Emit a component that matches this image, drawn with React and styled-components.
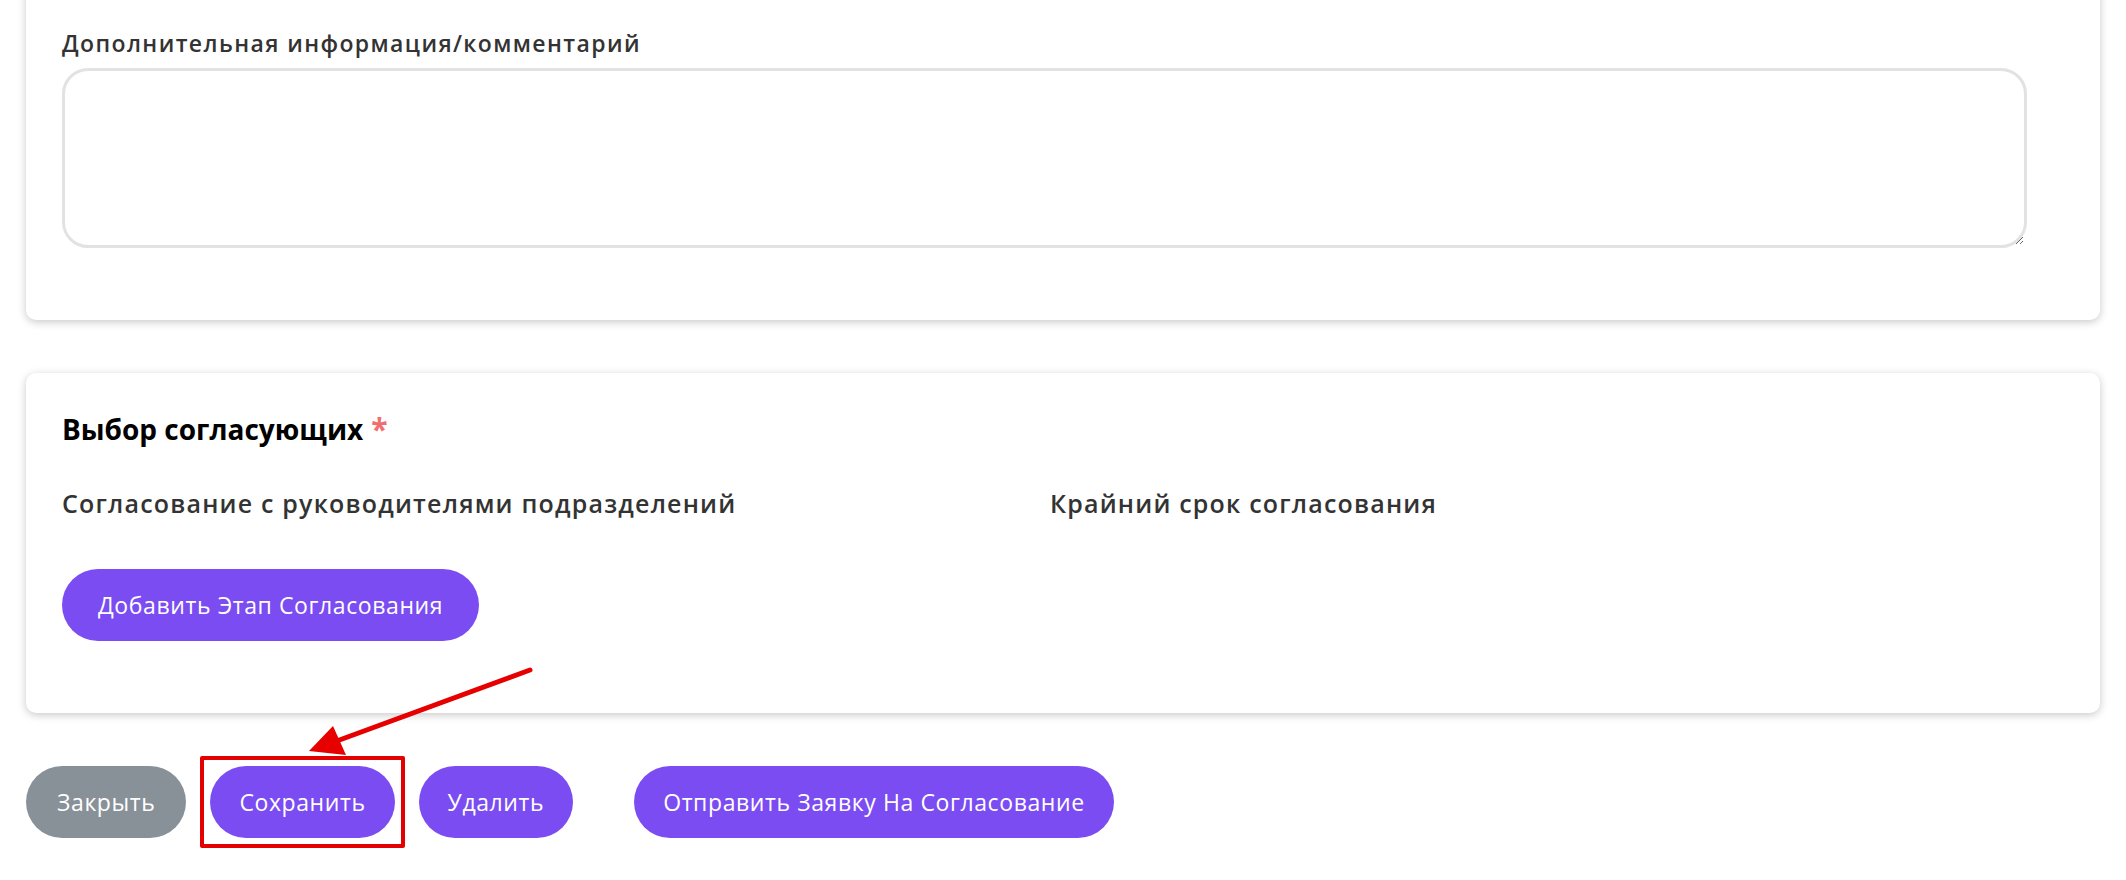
import React from 'react';
import styled, { createGlobalStyle } from 'styled-components';

const GlobalStyle = createGlobalStyle`
  html, body {
    margin: 0;
    padding: 0;
    background: #ffffff;
    font-family: 'Open Sans', 'Noto Sans', sans-serif;
  }
  html {
    overflow: hidden;
  }
`;

const Page = styled.div`
  position: relative;
  width: 2074px;
  padding: 0 0 40px 26px;
  display: flex;
  flex-direction: column;
  gap: 53px;
`;

const Card = styled.section`
  background: #ffffff;
  border-radius: 10px;
  box-shadow: 0 2px 8px rgba(0, 0, 0, 0.22);
  padding: ${({ $top }) => $top}px 36px 72px 36px;
  margin-top: ${({ $offset }) => $offset || 0}px;
`;

const FieldLabel = styled.div`
  font-size: 23px;
  font-weight: 600;
  color: #333333;
  line-height: 30px;
  margin-bottom: 10px;
  letter-spacing: 1.4px;
`;

const TextArea = styled.textarea`
  display: block;
  box-sizing: border-box;
  width: 1965px;
  height: 180px;
  border: 3px solid #e2e2e2;
  border-radius: 26px;
  resize: vertical;
  outline: none;
  font-family: inherit;
`;

const Title = styled.h2`
  margin: 0 0 40px 0;
  font-size: 28px;
  font-weight: 700;
  color: #000000;
  line-height: 36px;
  display: flex;
  align-items: flex-start;
  gap: 8px;
`;

const Required = styled.span`
  color: #f26d6d;
  font-size: 30px;
  line-height: 36px;
`;

const Columns = styled.div`
  display: grid;
  grid-template-columns: 988px 1fr;
  margin-bottom: 50px;
`;

const ColumnHead = styled.div`
  font-size: 25px;
  font-weight: 600;
  color: #333333;
  line-height: 32px;
  letter-spacing: 1.2px;
`;

const Pill = styled.button`
  height: 72px;
  border: none;
  border-radius: 36px;
  padding: 0 ${({ $pad }) => $pad || 30}px;
  background: ${({ $gray }) => ($gray ? '#899198' : '#7b4cf2')};
  color: #ffffff;
  font-family: inherit;
  font-size: 23px;
  font-weight: 400;
  letter-spacing: 0.6px;
  cursor: pointer;
  white-space: nowrap;
  outline: none;
`;

const Actions = styled.div`
  display: flex;
  align-items: center;
  gap: 24px;
`;

/* red annotation frame drawn over the save button */
const Marker = styled.div`
  display: flex;
  margin: -10px;
  padding: 6px;
  border: 4px solid #e30000;
  border-radius: 2px;
`;

const Spacer = styled.div`
  width: 13px;
`;

const Arrow = styled.svg`
  position: absolute;
  left: 290px;
  top: 658px;
  pointer-events: none;
`;

export default function App() {
  return (
    <>
      <GlobalStyle />
      <Page>
        <Card $top={48} $offset={-20}>
          <FieldLabel>Дополнительная информация/комментарий</FieldLabel>
          <TextArea />
        </Card>
        <Card $top={38}>
          <Title>
            Выбор согласующих <Required>*</Required>
          </Title>
          <Columns>
            <ColumnHead>Согласование с руководителями подразделений</ColumnHead>
            <ColumnHead>Крайний срок согласования</ColumnHead>
          </Columns>
          <Pill $pad={36}>Добавить Этап Согласования</Pill>
        </Card>
        <Actions>
          <Pill $gray $pad={31}>Закрыть</Pill>
          <Marker>
            <Pill $pad={29}>Сохранить</Pill>
          </Marker>
          <Pill $pad={29}>Удалить</Pill>
          <Spacer />
          <Pill $pad={29}>Отправить Заявку На Согласование</Pill>
        </Actions>
        <Arrow width="260" height="110" viewBox="0 0 260 110">
          <line x1="240" y1="12" x2="44" y2="84" stroke="#e60000" strokeWidth="5" strokeLinecap="round" />
          <polygon points="19,93 43,68 56,97" fill="#e60000" />
        </Arrow>
      </Page>
    </>
  );
}
